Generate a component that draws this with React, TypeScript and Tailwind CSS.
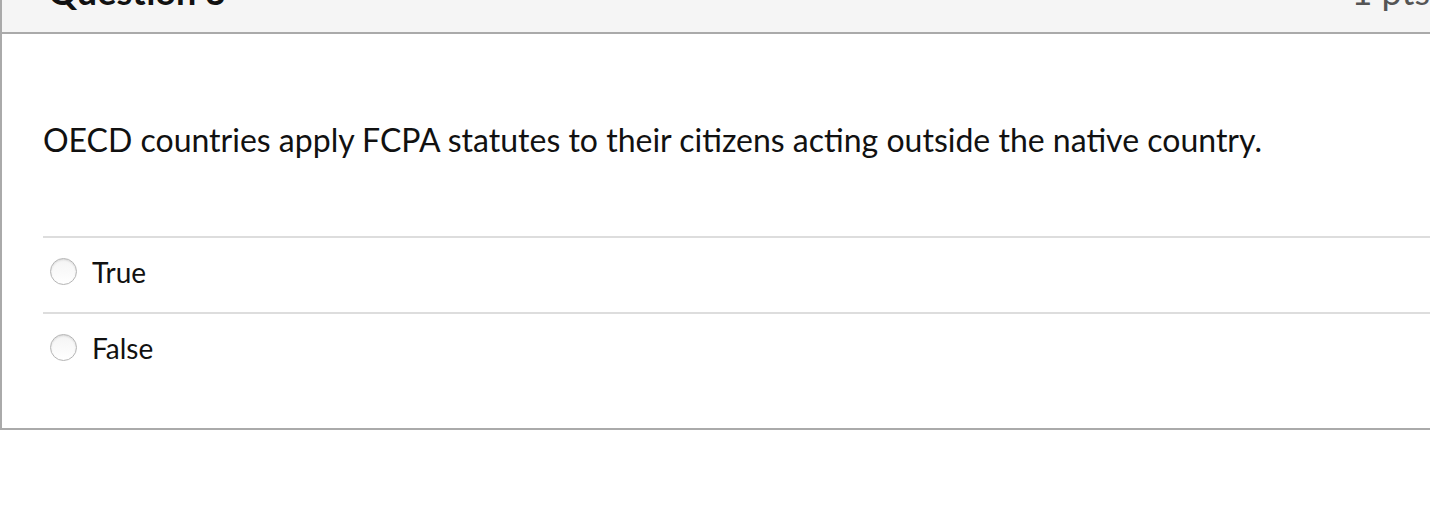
import React from 'react';

const ANSWERS = ['True', 'False'];

function Radio() {
  return (
    <span className="block w-[27px] h-[27px] rounded-full border border-[#b5b5b5] bg-gradient-to-b from-[#f4f4f4] to-white shadow-[inset_0_1px_2px_rgba(0,0,0,0.12)] shrink-0" />
  );
}

export default function App() {
  return (
    <div className="h-[530px] w-[1430px] overflow-hidden bg-white text-[#111] font-['Lato','Liberation_Sans',sans-serif]">
      <div className="w-[1460px] -mt-[30px] border-l-2 border-b-2 border-[#aaaaaa]">
        {/* header */}
        <div className="h-[64px] flex items-end justify-between pl-[46px] pr-[30px] pb-[21px] bg-[#f5f5f5] border-b-2 border-[#aaaaaa]">
          <span className="text-[36px] leading-[40px] font-bold">Question 3</span>
          <span className="text-[36px] leading-[40px] text-[#555]">1 pts</span>
        </div>

        {/* body */}
        <div className="pl-[41px] pt-[86px] pb-[40px]">
          <p className="text-[32px] leading-[40px] mb-[76px]">
            OECD countries apply FCPA statutes to their citizens acting outside the native country.
          </p>
          <div>
            {ANSWERS.map(a => (
              <div key={a} className="h-[76px] border-t-2 border-[#dddddd] flex items-center gap-[15px] pl-[7px] pb-[7px]">
                <Radio />
                <span className="text-[28px] leading-[32px]">{a}</span>
              </div>
            ))}
          </div>
        </div>
      </div>
    </div>
  );
}
